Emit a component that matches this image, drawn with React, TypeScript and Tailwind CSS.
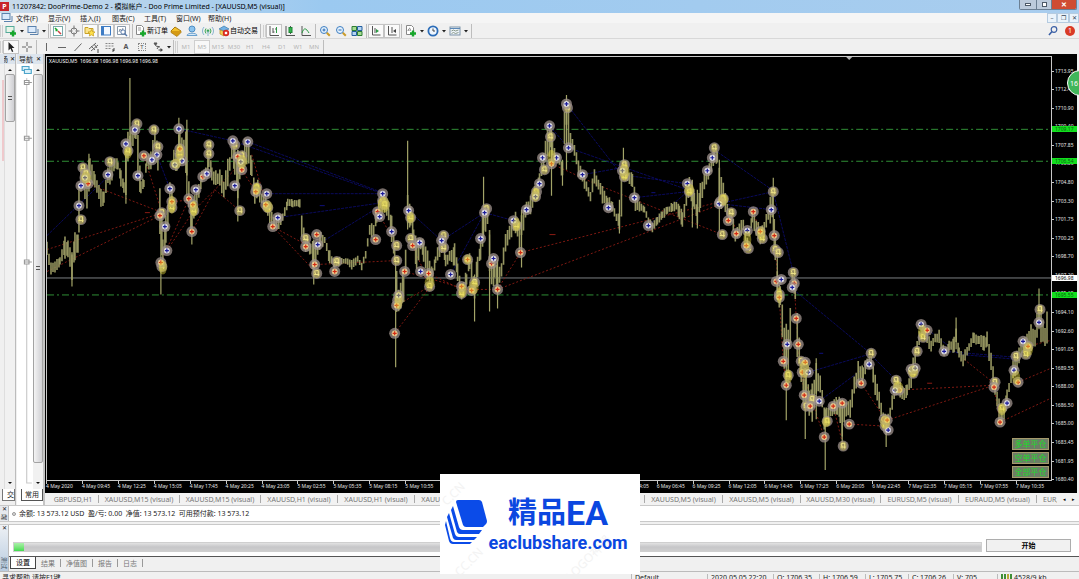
import React, { useState } from 'react';

// [x, high, low] anchor bars, the rest of the series is filled in between them
const ANCHORS: number[][] = [
    [47, 240, 256], [51, 262, 275], [55, 262, 276], [60, 255, 268], [65, 232, 260], [68, 240, 258], [72, 252, 284], [75, 232, 262], [78, 230, 258],
    [79, 180, 240], [81, 162, 200], [83, 166, 190], [87, 162, 210], [90, 158, 188], [95, 174, 188], [101, 185, 209], [104, 190, 206], [108, 166, 188],
    [112, 160, 182], [115, 155, 172], [118, 160, 172], [121, 166, 188], [124, 180, 194], [126, 150, 198], [128, 130, 165], [131, 130, 152], [136, 122, 140],
    [138, 132, 196], [141, 180, 194], [144, 178, 188], [147, 155, 168], [151, 150, 172], [153, 135, 172], [155, 125, 148], [158, 140, 178], [160, 170, 250],
    [163, 230, 270], [166, 215, 250], [168, 200, 233], [170, 180, 213], [172, 185, 208], [174, 146, 168], [177, 150, 173], [180, 122, 163], [184, 138, 160],
    [187, 125, 192], [189, 180, 215], [192, 200, 240], [195, 190, 213], [199, 180, 203], [202, 170, 184], [206, 165, 178], [209, 138, 168], [212, 164, 182],
    [216, 170, 190], [220, 168, 188], [224, 178, 202], [228, 158, 190], [232, 145, 163], [235, 140, 176], [238, 148, 200], [241, 155, 175], [245, 138, 163],
    [249, 142, 170], [252, 160, 178], [255, 184, 210], [258, 180, 198], [262, 190, 208], [266, 195, 213], [270, 206, 228], [275, 216, 230], [279, 213, 234],
    [283, 213, 223], [288, 197, 208], [293, 199, 209], [300, 198, 209], [302, 210, 238], [306, 235, 254], [311, 240, 258], [314, 238, 278], [318, 240, 258],
    [321, 232, 250], [325, 236, 246], [330, 250, 266], [335, 258, 270], [340, 256, 268], [346, 258, 265], [352, 260, 270], [358, 256, 264], [362, 262, 271],
    [366, 250, 260], [370, 222, 238], [374, 225, 238], [377, 206, 224], [381, 192, 213], [385, 196, 213], [389, 206, 224], [392, 216, 243], [395, 240, 262],
    [397, 260, 330], [399, 290, 312], [404, 268, 305], [406, 250, 273], [408, 195, 232], [411, 205, 228], [414, 226, 245], [417, 240, 275], [421, 236, 250],
    [424, 240, 263], [428, 250, 284], [433, 265, 288], [436, 255, 265], [440, 240, 258], [443, 236, 254], [446, 254, 268], [450, 250, 263], [455, 243, 268],
    [458, 260, 283], [462, 284, 302], [467, 270, 290], [470, 250, 270], [475, 275, 305], [478, 255, 278], [481, 238, 262], [484, 200, 240], [488, 205, 230],
    [490, 230, 275], [492, 255, 292], [495, 248, 286], [498, 270, 300], [502, 260, 278], [506, 230, 256], [510, 226, 244], [512, 220, 238], [516, 212, 234],
    [520, 215, 250], [524, 205, 232], [527, 202, 214], [531, 195, 220], [535, 186, 200], [540, 172, 188], [544, 152, 172], [548, 127, 163], [551, 125, 155],
    [556, 150, 164], [560, 152, 168], [563, 160, 180], [565, 105, 150], [567, 98, 128], [569, 105, 150], [571, 132, 150], [575, 145, 156], [579, 156, 178],
    [583, 170, 184], [587, 180, 195], [591, 190, 202], [595, 166, 184], [599, 180, 190], [603, 186, 204], [608, 196, 210], [613, 200, 213], [617, 211, 224],
    [620, 214, 230], [622, 170, 218], [624, 155, 183], [628, 166, 184], [633, 172, 190], [636, 190, 213], [640, 200, 213], [645, 206, 214], [649, 216, 225],
    [653, 221, 233], [658, 216, 225], [663, 210, 221], [668, 206, 215], [673, 202, 214], [677, 200, 210], [680, 202, 224], [683, 212, 228], [687, 190, 208],
    [690, 176, 198], [695, 190, 210], [698, 206, 226], [701, 182, 214], [705, 172, 190], [710, 161, 178], [715, 146, 164], [718, 150, 165], [720, 165, 220],
    [724, 182, 208], [728, 200, 219], [732, 211, 224], [736, 226, 244], [740, 221, 238], [744, 220, 234], [748, 236, 250], [753, 211, 224], [757, 216, 242],
    [761, 226, 246], [765, 220, 238], [769, 206, 223], [773, 185, 228], [776, 232, 264], [778, 270, 305], [781, 282, 310], [785, 318, 385], [789, 330, 378],
    [791, 300, 350], [793, 270, 298], [796, 278, 300], [798, 308, 358], [802, 350, 386], [804, 368, 420], [807, 366, 408], [810, 390, 418], [813, 382, 425],
    [817, 362, 398], [821, 372, 394], [825, 400, 434], [829, 405, 424], [833, 400, 418], [838, 396, 418], [841, 396, 424], [843, 398, 440], [847, 400, 418],
    [851, 398, 422], [855, 377, 400], [859, 358, 384], [864, 366, 384], [868, 356, 370], [872, 356, 372], [876, 372, 396], [880, 392, 414], [884, 410, 429],
    [887, 414, 440], [891, 405, 423], [895, 382, 404], [899, 376, 394], [903, 386, 403], [908, 385, 398], [912, 366, 390], [916, 350, 368], [920, 328, 350],
    [924, 321, 338], [928, 331, 344], [932, 340, 356], [936, 332, 344], [940, 330, 348], [945, 348, 360], [950, 341, 354], [955, 334, 354], [957, 325, 344],
    [960, 348, 359], [964, 354, 368], [970, 341, 354], [975, 331, 344], [980, 335, 348], [985, 336, 354], [988, 332, 350], [992, 350, 374], [996, 376, 400],
    [1000, 396, 428], [1003, 410, 428], [1008, 390, 408], [1012, 370, 384], [1016, 352, 378], [1020, 346, 364], [1024, 336, 354], [1028, 330, 358],
    [1032, 322, 354], [1036, 326, 348], [1040, 300, 330], [1042, 305, 350], [1046, 325, 350], [1050, 292, 348],
];

const SPIKES: number[][] = [
    [72, 255, 287], [89, 154, 180], [130, 78, 152], [126, 140, 204], [161, 215, 295], [179, 118, 160], [187, 120, 195], [192, 210, 245], [238, 150, 222],
    [314, 240, 285], [396, 260, 368], [408, 141, 230], [475, 275, 322], [484, 177, 240], [490, 235, 312], [552, 130, 196], [522, 210, 268], [567, 95, 170],
    [563, 160, 186], [624, 148, 180], [620, 200, 234], [774, 178, 235], [778, 250, 300], [787, 340, 421], [806, 380, 440], [826, 410, 471], [843, 400, 450],
    [887, 420, 448], [957, 318, 350], [1040, 289, 330], [720, 160, 232], [817, 359, 420], [693, 180, 228], [698, 190, 229], [498, 260, 309],
];

const noise = (n: number) => {
    const s = Math.sin(n * 91.7) * 4375.85;
    return s - Math.floor(s);
};

const buildBars = () => {
    let d = '';
    for (let i = 0; i < ANCHORS.length - 1; i++) {
        const [x0, h0, l0] = ANCHORS[i];
        const [x1, h1, l1] = ANCHORS[i + 1];
        for (let x = x0; x < x1; x += 2) {
            const t = (x - x0) / (x1 - x0);
            const high = h0 + (h1 - h0) * t;
            const low = l0 + (l1 - l0) * t;
            const span = low - high;
            d += `M${x} ${(high + span * 0.25 * noise(x)).toFixed(1)}V${(low - span * 0.25 * noise(x + 7)).toFixed(1)}`;
        }
    }
    return d;
};

const BARS = buildBars();
const SPIKE_PATH = SPIKES.map(([x, a, b]) => `M${x} ${a}V${b}`).join('');

const BUYS: number[][] = [
    [135, 130], [126, 144], [179, 129], [157, 155], [152, 160], [138, 176], [108, 175], [85, 178], [81, 186], [79, 206], [170, 189], [175, 165], [182, 161],
    [196, 190], [207, 174], [165, 227], [167, 251], [233, 141], [248, 142], [241, 162], [235, 186], [267, 194], [278, 218], [318, 245], [383, 194], [380, 217],
    [392, 232], [409, 211], [420, 243], [421, 272], [442, 241], [451, 275], [399, 296], [481, 239], [485, 213], [494, 259], [514, 221], [527, 210], [536, 197],
    [540, 184], [543, 158], [557, 158], [567, 104], [550, 126], [569, 148], [583, 175], [623, 171], [609, 208], [635, 198], [649, 226], [688, 184], [708, 171],
    [713, 158], [720, 204], [748, 231], [772, 210], [782, 280], [793, 288], [788, 345], [809, 373], [820, 402], [870, 365], [896, 391], [889, 431], [912, 370],
    [916, 369], [922, 325], [945, 352], [1008, 404], [1015, 371], [1024, 342], [1040, 323],
];

const SELLS: number[][] = [
    [144, 156], [88, 184], [180, 149], [172, 202], [189, 199], [193, 205], [203, 177], [192, 232], [160, 216], [161, 263], [238, 157], [242, 170], [256, 192],
    [266, 205], [273, 227], [306, 247], [317, 235], [315, 265], [335, 272], [376, 240], [378, 212], [405, 272], [413, 246], [429, 274], [397, 306], [395, 334],
    [468, 260], [462, 287], [472, 291], [492, 264], [498, 290], [521, 253], [552, 164], [721, 202], [729, 221], [737, 234], [747, 246], [754, 212], [761, 232],
    [775, 236], [777, 282], [780, 298], [795, 284], [797, 319], [799, 345], [784, 362], [787, 386], [806, 363], [803, 373], [805, 396], [811, 407], [825, 438],
    [834, 407], [843, 404], [850, 425], [862, 384], [900, 391], [885, 420], [888, 421], [928, 331], [995, 388], [1001, 423], [1019, 383], [1029, 347],
];

const CLOSES: number[][] = [
    [137, 124], [128, 151], [154, 130], [158, 147], [110, 162], [83, 168], [86, 174], [81, 220], [180, 154], [172, 208], [194, 211], [209, 145], [209, 154],
    [162, 213], [162, 267], [235, 145], [242, 156], [240, 211], [257, 188], [268, 208], [306, 239], [317, 274], [337, 262], [383, 201], [385, 205], [397, 246],
    [397, 261], [411, 218], [411, 239], [430, 287], [444, 236], [444, 248], [398, 301], [462, 294], [475, 283], [487, 209], [517, 226], [537, 192], [545, 170],
    [551, 137], [568, 108], [625, 165], [625, 177], [690, 192], [715, 148], [724, 199], [732, 213], [723, 235], [749, 249], [763, 239], [774, 192], [776, 250],
    [779, 253], [780, 295], [794, 273], [789, 376], [802, 362], [807, 407], [813, 400], [828, 422], [844, 447], [872, 354], [897, 381], [886, 427], [918, 352],
    [914, 374], [924, 338], [996, 383], [1003, 409], [1017, 357], [1027, 355], [1041, 310],
];

// solid yellow patches where several orders sit on one bar
const GLOWS: number[][] = [
    [128, 153, 4, 6], [180, 153, 4, 9], [86, 178, 5, 6], [172, 205, 4, 9], [163, 268, 4, 7], [194, 209, 4, 8], [176, 164, 5, 5], [242, 162, 5, 7], [257, 189, 4, 6],
    [268, 207, 5, 6], [384, 205, 6, 8], [411, 218, 4, 6], [399, 301, 4, 9], [430, 283, 5, 6], [463, 291, 4, 7], [474, 288, 5, 7], [468, 260, 4, 5], [517, 225, 4, 7],
    [536, 195, 4, 7], [552, 158, 4, 8], [625, 172, 5, 8], [690, 190, 5, 6], [724, 200, 5, 6], [748, 240, 4, 9], [762, 234, 4, 7], [780, 296, 3, 8], [805, 370, 5, 9],
    [789, 377, 4, 7], [827, 423, 4, 5], [886, 423, 5, 7], [914, 372, 5, 6], [923, 332, 4, 7], [899, 388, 5, 6], [1003, 410, 4, 6], [1029, 350, 5, 7], [1017, 378, 4, 7],
];

const BLUE_LINES =
    'M47 236L110 175M179 129L233 141L383 194M267 194L383 194M278 218L383 203M318 245L383 205M248 142L383 193M157 155L170 189M409 211L442 241M442 241L485 213L514 221M485 213L451 275M567 104L622 175L688 184M569 148L688 190M583 175L622 168M635 198L688 192M649 226L688 192M715 150L774 191M720 204L774 192M720 204L772 210M774 192L794 273M794 290L870 353M809 373L870 355M820 402L870 365M870 354L897 381M922 325L960 355L1017 360M550 126L569 148M945 352L1017 358';
const RED_LINES =
    'M47 250L160 214M47 272L160 216M88 184L160 212M144 156L162 213M172 202L194 200M167 251L194 211L240 165M192 232L215 190L240 211M189 199L161 263M242 170L256 192M273 227L306 245M273 227L317 274M317 265L397 261M378 212L397 246M395 334L430 288M397 306L430 287M405 272L475 292M413 246L430 285M429 274L462 290H498M498 290L521 253M521 253L721 202M498 290L720 205M552 164L600 186L723 235M721 202L732 213L737 234M754 212L763 239M775 236L780 298M780 298L784 362L787 386M795 284L797 319L799 345L805 396M797 345L803 373L825 438M834 407L844 447M850 425L886 427M862 384L886 420M897 391L995 386M888 421L995 386M965 360L995 384M995 388L1001 423M1001 423L1052 399M1019 383L1052 369M1029 347L1052 341M252 155L273 227';

const PRICES = [
    '1713.95', '1712.40', '1710.90', '1709.40', '1707.85', '1706.30', '1704.80', '1703.30', '1701.75', '1700.25', '1698.70', '1697.20',
    '1695.65', '1694.10', '1692.60', '1691.05', '1689.55', '1688.00', '1686.50', '1685.00', '1683.45', '1681.95', '1680.40',
];

const TIMES = [
    '4 May 2020', '4 May 09:45', '4 May 12:25', '4 May 15:05', '4 May 17:45', '4 May 20:25', '4 May 23:05', '5 May 02:55', '5 May 05:35', '5 May 08:15',
    '5 May 10:55', '5 May 13:35', '5 May 16:15', '5 May 18:55', '5 May 21:35', '6 May 01:25', '6 May 04:05', '6 May 06:45', '6 May 09:25', '6 May 12:05',
    '6 May 14:45', '6 May 17:25', '6 May 20:05', '6 May 22:45', '7 May 02:35', '7 May 05:15', '7 May 07:55', '7 May 10:35',
];

const CHART_TABS = [
    { label: 'GBPUSD,H1', width: 'w-[51px]' },
    { label: 'XAUUSD,M15 (visual)', width: 'w-[81px]' },
    { label: 'XAUUSD,M15 (visual)', width: 'w-[81px]' },
    { label: 'XAUUSD,H1 (visual)', width: 'w-[77px]' },
    { label: 'XAUUSD,H1 (visual)', width: 'w-[77px]' },
    { label: 'XAUUSD,H1 (visual)', width: 'w-[77px]' },
    { label: 'XAUUSD,H1 (visual)', width: 'w-[77px]' },
    { label: 'XAUUSD,H1 (visual)', width: 'w-[76px]' },
    { label: 'XAUUSD,M5 (visual)', width: 'w-[78px]' },
    { label: 'XAUUSD,M5 (visual)', width: 'w-[78px]' },
    { label: 'XAUUSD,M30 (visual)', width: 'w-[80px]' },
    { label: 'EURUSD,M5 (visual)', width: 'w-[78px]' },
    { label: 'EURAUD,M5 (visual)', width: 'w-[78px]' },
];

const Svg: React.FC<{ children: React.ReactNode }> = ({ children }) => (
    <svg viewBox="0 0 12 12" className="w-3 h-3 shrink-0" fill="none" stroke="#555" strokeWidth="1">
        {children}
    </svg>
);

const PLUS = <path d="M8 5.5v6M5 8.5h6" stroke="#16a62a" strokeWidth="2.4" />;

const ICONS: Record<string, React.ReactNode> = {
    newChart: <Svg><rect x="1" y="1.5" width="8" height="6" fill="#e8f5e8" stroke="#5a9" />{PLUS}</Svg>,
    profiles: <Svg><rect x="1" y="1.5" width="8" height="6" fill="#dbeafb" stroke="#5b82ad" /><path d="M3 9.5h8V4" stroke="#5b82ad" /></Svg>,
    market: <Svg><rect x="1.5" y="1.5" width="9" height="9" fill="#fff" stroke="#7aa" /><path d="M3 3l2.500 2.500M3.500 5.500h2" stroke="#16a62a" strokeWidth="1.500" /><path d="M6 6l3 3" stroke="#c44" strokeWidth="1.500" /></Svg>,
    data: <Svg><circle cx="6" cy="6" r="3" stroke="#777" /><path d="M6 .5v4M6 7.500v4M.5 6h4M7.500 6h4" stroke="#777" /></Svg>,
    folder: <Svg><path d="M1 2.500h3l1 1h4v5H1z" fill="#fce48a" stroke="#c9a227" /><path d="M7.500 4.500l1 2.200 2.500.3-1.800 1.600.5 2.400-2.200-1.200-2.200 1.200.5-2.400L4 7l2.500-.3z" fill="#ffe14d" stroke="#c39a15" strokeWidth=".7" /></Svg>,
    navigator: <Svg><rect x="1.500" y="1.500" width="9" height="8.500" fill="#f4f9ff" stroke="#3e7cc4" /><path d="M3 2v8" stroke="#3e7cc4" strokeWidth="2" /></Svg>,
    tester: <Svg><path d="M1.500 1.500h8v8h-8zM3 7l1-3 1.500 2L7 3" fill="#fff" stroke="#89a" /><circle cx="7" cy="7" r="2.200" stroke="#57a" /><path d="M8.500 8.500l2.500 2.500" stroke="#57a" strokeWidth="1.400" /></Svg>,
    order: <Svg><path d="M1.500.500h5l2 2v7h-7z" fill="#fff" stroke="#888" /><path d="M3 3h3M3 5h3" stroke="#999" />{PLUS}</Svg>,
    meta: <Svg><path d="M1 6l4-4 6 4-4 4z" fill="#f3c12d" stroke="#a97a10" /><path d="M1 6v1.500l6 4L11 7.500V6" fill="#d59a14" stroke="#a97a10" strokeWidth=".7" /></Svg>,
    cloud: <Svg><circle cx="6" cy="4" r="3" fill="#8cc3ee" stroke="#4f8ec4" /><path d="M1 10.500c0-3 10-3 10 0z" fill="#d7e9f8" stroke="#6aa0ce" /></Svg>,
    signal: <Svg><circle cx="6" cy="6" r="1.400" fill="#39a552" stroke="none" /><path d="M4 3.500a4 4 0 0 0 0 5M8 3.500a4 4 0 0 1 0 5" stroke="#39a552" /><path d="M2 2a6 6 0 0 0 0 8M10 2a6 6 0 0 1 0 8M6 6v5" stroke="#8ab4cf" /></Svg>,
    auto: <Svg><path d="M1 4l5-3 5 3-5 2z" fill="#72b3e6" stroke="#3b79ab" strokeWidth=".7" /><path d="M2 5v4l4 2V6.500z" fill="#f5cf57" stroke="#b58a1c" strokeWidth=".7" /><circle cx="8" cy="8" r="3.200" fill="#d9281f" stroke="none" /><rect x="6.800" y="6.800" width="2.400" height="2.400" fill="#fff" stroke="none" /></Svg>,
    bars: <Svg><path d="M2 1v9.500h9M5 3v5M5 7h1.500M7 4h1.500" stroke="#555" /><path d="M8.500 2v6" stroke="#2b9b43" /></Svg>,
    candles: <Svg><path d="M2 1v9.500h9M6.500 1v8" stroke="#555" /><rect x="5" y="2.500" width="3" height="5" fill="#33b44c" stroke="#1c8434" /></Svg>,
    line: <Svg><path d="M2 1v9.500h9" /><path d="M2 8c2-6 4-5 7 0" stroke="#2b9b43" /></Svg>,
    zoomIn: <Svg><circle cx="5" cy="5" r="3.500" fill="#e5f2fd" stroke="#3f7fc2" /><path d="M7.800 7.800l3 3" stroke="#c99b2a" strokeWidth="2" /><path d="M3.500 5h3M5 3.500v3" stroke="#2869b2" /></Svg>,
    zoomOut: <Svg><circle cx="5" cy="5" r="3.500" fill="#e5f2fd" stroke="#3f7fc2" /><path d="M7.800 7.800l3 3" stroke="#c99b2a" strokeWidth="2" /><path d="M3.500 5h3" stroke="#2869b2" /></Svg>,
    tile: <Svg><path d="M1 1.500h4.500v4H1zM6.500 6.500H11v4H6.500z" fill="#a6dc92" stroke="#2d7d32" /><path d="M6.500 1.500H11v4H6.500zM1 6.500h4.500v4H1z" fill="#b4d4f2" stroke="#235f9f" /></Svg>,
    scroll: <Svg><path d="M2.500 1v9h8M5 3v5" /><path d="M6 4l3 2-3 2z" fill="#2b9b43" stroke="none" /></Svg>,
    shift: <Svg><path d="M2.500 1v9h8M6 2v6" /><path d="M10 4L7 6l3 2z" fill="#444" stroke="none" /></Svg>,
    indicators: <Svg><path d="M1.500.500h5l2 2v7h-7z" fill="#fff" stroke="#888" /><path d="M3 6c1-4 3-3 2 0" stroke="#777" />{PLUS}</Svg>,
    clock: <Svg><circle cx="6" cy="6" r="4.600" fill="#eef6ff" stroke="#2b6cb8" strokeWidth="1.800" /><path d="M6 3.500V6h2" stroke="#444" /></Svg>,
    template: <Svg><rect x="1" y="2" width="10" height="8" fill="#eef4fa" stroke="#7d93a8" /><path d="M1 3.500h10" stroke="#5c89b8" /><path d="M2.500 6l2-1 2 1 3-1M2.500 8.500l2-1 2 1 3-1" stroke="#8a9a8a" /></Svg>,
    cursor: <Svg><path d="M3.500 1v8.500l2-2 1.500 3.500 1.300-.6L6.800 7H9.500z" fill="#222" stroke="none" /></Svg>,
    cross: <Svg><path d="M6 1v4M6 7v4M1 6h4M7 6h4" stroke="#666" /></Svg>,
    vline: <Svg><path d="M6.500 2v8" stroke="#666" /></Svg>,
    hline: <Svg><path d="M2 6.500h8" stroke="#666" /></Svg>,
    trend: <Svg><path d="M2.500 10L9.500 2.500" stroke="#666" /></Svg>,
    channel: <Svg><path d="M1 8l7-6M3 10l7-6M3 5l4 4M6 3l3 4" stroke="#666" /><path d="M9 9h2M9 11h2" stroke="#444" /></Svg>,
    fibo: <Svg><path d="M1.500 2.500h9M1.500 5h9M1.500 7.500h6" stroke="#888" strokeDasharray="2 1" /><path d="M9 11V8h2M9 9.500h1.500" stroke="#444" /></Svg>,
    arrows: <Svg><path d="M2 2h3L3.500 4.500zM4 5l4 1M5 8l2-3" fill="#555" stroke="#555" /><path d="M6.500 8.500h2V7L11 9 8.500 11V9.500h-2z" fill="#444" stroke="none" /></Svg>,
};

const Tool: React.FC<{ icon: string; label: string; pressed?: boolean }> = ({ icon, label, pressed }) => (
    <button
        type="button"
        aria-label={label}
        className={`w-4 h-3.5 shrink-0 flex items-center justify-center ${pressed ? 'bg-[#fafafa] border border-[#c4c4c4]' : ''}`}
    >
        {ICONS[icon]}
    </button>
);

const Caret = () => (
    <svg viewBox="0 0 6 6" className="w-1.5 h-1.5 shrink-0"><path d="M1 2h4L3 4.500z" fill="#222" /></svg>
);
const Sep = () => <span className="w-px h-3.5 mx-0.5 shrink-0 bg-[#bdbdbd]" />;
const ThinSep = () => <span className="w-px h-3.5 mx-px shrink-0 bg-[#bdbdbd]" />;
const Grip = () => <span className="w-[3px] h-3 shrink-0 border-x border-[#cfcfcf]" />;

const Chart: React.FC = () => (
    <svg viewBox="47 57 1005 424" preserveAspectRatio="none" className="absolute inset-0 w-full h-full">
        <defs>
            <g id="body">
                <circle r="5.500" fill="#9f918c" fillOpacity=".75" />
            </g>
            <g id="buy">
                <use href="#body" />
                <circle r="2.900" fill="#e6e6ee" fillOpacity=".9" />
                <path d="M-2 0H2M0-2V2" stroke="#1c1c9a" strokeWidth="1.200" />
            </g>
            <g id="sell">
                <use href="#body" />
                <circle r="2.900" fill="#f2cf8e" fillOpacity=".9" />
                <path d="M-2 0H2M0-2V2" stroke="#d42a14" strokeWidth="1.200" />
            </g>
            <g id="close">
                <use href="#body" />
                <ellipse rx="3.500" ry="4.500" fill="#ddd23f" fillOpacity=".35" />
                <path d="M-2-2.500L1.500-3V2.500M-2.500 1H2.500M-2-2L-1 1" stroke="#efe389" fill="none" />
            </g>
        </defs>
        <path d="M47 129.500H1052M47 161.500H1052M47 295.500H1052" stroke="#2f8f35" strokeDasharray="7 3 2 3" />
        <path d="M47 278.500H1052" stroke="#7c8083" />
        <path d={BLUE_LINES} stroke="#0c0c74" strokeWidth=".8" fill="none" strokeDasharray="3 1" />
        <path d={RED_LINES} stroke="#8c1c14" strokeWidth=".9" fill="none" strokeDasharray="2 2" />
        <path d="M550 235h6M928 384h5M145 213h5" stroke="#8c1c14" />
        <path d="M320 206h5M652 193h4M820 354h4" stroke="#10107c" />
        <path d={BARS} stroke="#94945f" strokeWidth="1.600" />
        <path d={SPIKE_PATH} stroke="#a3a468" strokeWidth="1.200" />
        {CLOSES.map(([x, y], i) => <use key={i} href="#close" x={x} y={y} />)}
        {SELLS.map(([x, y], i) => <use key={i} href="#sell" x={x} y={y} />)}
        {BUYS.map(([x, y], i) => <use key={i} href="#buy" x={x} y={y} />)}
        {GLOWS.map(([x, y, rx, ry], i) => <ellipse key={i} cx={x} cy={y} rx={rx} ry={ry} fill="#e3d83c" fillOpacity=".45" />)}
        <path d="M847 57h6l-3 3z" fill="#b5b5b5" />
    </svg>
);

const ScrollBar: React.FC<{ thumb: string }> = ({ thumb }) => (
    <div className="w-2.5 shrink-0 flex flex-col items-center bg-[#f1f1f1] py-0.5">
        <Arrow up />
        <div className="flex-1 min-h-0 w-full">
            <div className={`${thumb} w-full flex items-center justify-center rounded-xs border border-[#a3a3a3] bg-linear-to-r from-[#f4f4f4] to-[#cfcfd3]`}>
                <span className="w-1 h-1 border-y border-[#555]" />
            </div>
        </div>
        <Arrow />
    </div>
);

const Arrow: React.FC<{ up?: boolean }> = ({ up }) => (
    <svg viewBox="0 0 6 8" className="w-1.5 h-2 shrink-0"><path d={up ? 'M1 5h4L3 3z' : 'M1 3h4L3 5z'} fill="#111" /></svg>
);

const LogoCard: React.FC = () => (
    <div className="relative w-[200px] h-[100px] overflow-hidden bg-white text-[#0b47e0]">
        <span className="absolute left-0 top-3 -rotate-45 text-xs text-[#f3f3f3]">C.CN</span>
        <span className="absolute left-3 top-20 -rotate-45 text-xs text-[#f3f3f3]">CC.CN</span>
        <span className="absolute left-[120px] top-[76px] -rotate-45 text-xs text-[#f3f3f3]">LOGO神器</span>
        <div className="relative flex items-center h-full pl-[5px]">
            <svg viewBox="0 0 44 46" className="w-11 h-[46px] shrink-0 self-start mt-6" fill="#0b4be8">
                <path d="M13 2H34Q36 2 37 4L42 23Q42 25 41 26L38 29H21Q19 29 18 27L11 4Q11 2 13 2Z" />
                <path d="M8 8L14 29Q15 32 18 32H37L34 36H15Q13 36 12 34L6 12Z" />
                <path d="M4 15L10 36Q11 39 14 39H32L29 42H11Q9 42 8 40L2 19Z" />
                <path d="M1 23L5 40Q6 44 9 44H27L25 46H8Q5 46 4 43L0 27Z" />
            </svg>
            <div className="flex flex-col items-center gap-0.5">
                <div className="flex items-center h-9 font-bold font-[Roboto,'Noto_Sans_CJK_SC',sans-serif]">
                    <span className="text-[29px]">精品</span>
                    <span className="text-[34px]">EA</span>
                </div>
                <span className="font-bold text-[18px] leading-5 font-[Roboto,sans-serif]">eaclubshare.com</span>
            </div>
        </div>
    </div>
);

const App: React.FC = () => {
    const [period, setPeriod] = useState('M5');
    const [tab, setTab] = useState('设置');

    return (
        <div className="relative h-screen min-w-0 flex flex-col overflow-hidden bg-[#f0f0f0] text-[7px] leading-none text-[#222] font-['Noto_Sans','Noto_Sans_CJK_SC',sans-serif]">
            {/* Title bar */}
            <header className="h-[13px] shrink-0 flex items-center bg-linear-to-r from-[#c9dbea] via-[#9bc9f0] via-30% to-[#a9cdee]">
                <span className="w-[9px] h-[9px] mr-[3px] shrink-0 flex items-center justify-center bg-[#c8242b] font-bold text-white">P</span>
                <h1 className="flex-1 whitespace-nowrap text-black">11207842: DooPrime-Demo 2 - 模拟帐户 - Doo Prime Limited - [XAUUSD,M5 (visual)]</h1>
                <div className="flex self-start h-2.5 mr-0.5 border border-t-0 border-[#6b7f93] rounded-b-xs overflow-hidden text-white">
                    <button type="button" aria-label="最小化" className="w-4 flex items-center justify-center bg-[#bccbdc]"><span className="w-1.5 h-[3px] border border-[#4d5a68] bg-white" /></button>
                    <button type="button" aria-label="还原" className="w-4 flex items-center justify-center bg-[#bccbdc] border-x border-[#6b7f93]"><span className="w-[5px] h-[5px] border border-[#4d5a68] bg-white" /></button>
                    <button type="button" aria-label="关闭" className="w-6 flex items-center justify-center bg-[#cf4c33] font-bold">✕</button>
                </div>
            </header>

            {/* Menu */}
            <nav className="h-[10px] shrink-0 flex items-center bg-[#f5f5f5] pl-px">
                {ICONS.profiles}
                <span className="w-[3px]" />
                {['文件(F)', '显示(V)', '插入(I)', '图表(C)', '工具(T)', '窗口(W)', '帮助(H)'].map(item => (
                    <button key={item} type="button" className="w-8 shrink-0 whitespace-nowrap text-left">{item}</button>
                ))}
                <div className="ml-auto flex text-[6px] text-[#345]">
                    <button type="button" aria-label="最小化图表" className="w-2.5 h-2.5 border border-[#b5cbe0] bg-[#eaf3fb]">–</button>
                    <button type="button" aria-label="还原图表" className="w-3 h-2.5 border border-[#b5cbe0] bg-[#eaf3fb]">❐</button>
                    <button type="button" aria-label="关闭图表" className="w-2.5 h-2.5 border border-[#b5cbe0] bg-[#eaf3fb]">✕</button>
                </div>
            </nav>

            {/* Toolbars */}
            <div className="h-4 shrink-0 flex items-center border-b border-[#d8d8d8]">
                <Grip />
                <Tool icon="newChart" label="新图表" /><Caret />
                <Tool icon="profiles" label="配置文件" /><Caret />
                <ThinSep />
                <Tool icon="market" label="市场报价" pressed />
                <Tool icon="data" label="数据窗口" />
                <Tool icon="folder" label="导航" pressed />
                <Tool icon="navigator" label="终端" pressed />
                <Tool icon="tester" label="策略测试" pressed />
                <Sep />
                <button type="button" className="flex items-center shrink-0 text-black">{ICONS.order}新订单</button>
                <Tool icon="meta" label="MetaEditor" />
                <Tool icon="cloud" label="社区" />
                <Tool icon="signal" label="信号" />
                <button type="button" className="flex items-center shrink-0 ml-0.5 text-black">{ICONS.auto}自动交易</button>
                <Sep /><Grip />
                <Tool icon="bars" label="柱状图" pressed />
                <Tool icon="candles" label="阴阳烛" />
                <Tool icon="line" label="折线图" />
                <ThinSep />
                <Tool icon="zoomIn" label="放大" />
                <Tool icon="zoomOut" label="缩小" />
                <Tool icon="tile" label="平铺" />
                <ThinSep />
                <Tool icon="scroll" label="自动滚动" pressed />
                <Tool icon="shift" label="图表平移" pressed />
                <ThinSep />
                <Tool icon="indicators" label="指标" /><Caret />
                <Tool icon="clock" label="周期" /><Caret />
                <Tool icon="template" label="模板" /><Caret />
                <Sep />
                <div className="ml-auto flex items-center gap-1.5 pr-1">
                    <button type="button" aria-label="搜索">
                        <Svg><circle cx="7" cy="4.500" r="2.800" stroke="#3a5fa5" strokeWidth="1.200" /><path d="M5 6.500L2 10" stroke="#3a5fa5" strokeWidth="1.600" /></Svg>
                    </button>
                    <button type="button" className="w-2.5 h-2.5 rounded-full bg-[#d93a26] text-white">1</button>
                </div>
            </div>
            <div className="h-[15px] shrink-0 flex items-center">
                <Grip />
                <Tool icon="cursor" label="光标" pressed />
                <Tool icon="cross" label="十字线" />
                <ThinSep />
                <Tool icon="vline" label="垂直线" />
                <Tool icon="hline" label="水平线" />
                <Tool icon="trend" label="趋势线" />
                <Tool icon="channel" label="通道" />
                <Tool icon="fibo" label="斐波那契" />
                <button type="button" className="w-4 font-bold text-[#555]">A</button>
                <button type="button" className="w-4 flex justify-center text-[6px] text-[#555]"><span className="w-2 h-2 border border-dotted border-[#888]">T</span></button>
                <Tool icon="arrows" label="箭头" /><Caret />
                <ThinSep /><Grip />
                {['M1', 'M5', 'M15', 'M30', 'H1', 'H4', 'D1', 'W1', 'MN'].map(p => (
                    <button
                        key={p}
                        type="button"
                        onClick={() => setPeriod(p)}
                        className={`w-4 h-3.5 shrink-0 text-[6px] text-[#b4b4b4] ${p === period ? 'bg-[#f8f8f8] border border-[#cfcfcf]' : ''}`}
                    >
                        {p}
                    </button>
                ))}
                <ThinSep />
            </div>

            {/* Workspace */}
            <main className="flex-1 min-h-0 flex">
                <aside className="w-4 min-h-0 shrink-0 flex flex-col border-r border-[#bcbcbc] bg-[#f0f0f0]">
                    <div className="h-2.5 shrink-0 flex items-center justify-end gap-0.5 overflow-hidden bg-[#dce4ed]"><span className="w-1 overflow-hidden flex justify-end">场</span><span className="text-[6px] text-black">✕</span></div>
                    <div className="flex-1 min-h-0 flex justify-end">
                        <div className="flex-1 border-r border-[#dedede]"><div className="h-[19%] mt-4 border-r-2 border-[#efc9cc]" /></div>
                        <ScrollBar thumb="h-12" />
                    </div>
                    <div className="h-3 mb-1 shrink-0 ml-0.5 border border-t-0 border-[#777] bg-white overflow-hidden flex items-center justify-end">交</div>
                </aside>
                <aside className="w-7 min-h-0 shrink-0 flex flex-col ml-px border-r-2 border-[#c4c4c4] bg-white">
                    <div className="h-2.5 shrink-0 flex items-center justify-between px-0.5 bg-[#dce4ed]"><span className="whitespace-nowrap">导航</span><span className="text-[6px] text-black">✕</span></div>
                    <div className="flex-1 min-h-0 flex">
                        <svg viewBox="0 0 14 426" preserveAspectRatio="none" className="flex-1 min-w-0 h-full" fill="none" stroke="#999">
                            <rect x="4.500" y="2.500" width="6" height="4" fill="#d9f0fa" stroke="#4ba3c9" />
                            <rect x="6.500" y="5.500" width="6" height="4" fill="#d9f0fa" stroke="#4ba3c9" />
                            <path d="M8.500 14V420H13" stroke="#c9c9c9" />
                            <path d="M6.500 16.500h4v4h-4zM6.500 72.500h4v4h-4zM6.500 196.500h4v4h-4z" fill="#fff" />
                            <path d="M7 18.500h6M7 74.500h6M7 198.500h6" />
                        </svg>
                        <ScrollBar thumb="h-[96%]" />
                    </div>
                    <div className="h-3 mb-1 shrink-0 ml-1 border border-t-0 border-[#555] bg-white flex items-center justify-center whitespace-nowrap">常用</div>
                </aside>

                <section className="flex-1 min-w-0 flex flex-col">
                    <div className="flex-1 min-h-0 flex flex-col bg-black mr-0.5 pt-0.5 pl-px text-[5px] text-[#e6e6e6]">
                        <div className="flex-1 min-h-0 flex">
                            <div className="relative flex-1 border border-[#c8c8c8]">
                                <Chart />
                                <p className="relative pt-0.5 pl-0.5 text-white">XAUUSD,M5&nbsp; 1696.98 1696.98 1696.98 1696.98</p>
                                <div className="absolute right-0.5 bottom-0.5 flex flex-col gap-0.5">
                                    {['多单平仓', '空单平仓', '全部平仓'].map(label => (
                                        <button key={label} type="button" className="w-[37px] h-3 border border-[#a59a6c] bg-[#6d7d66] text-[8px] leading-[10px] text-[#22d62c]">{label}</button>
                                    ))}
                                </div>
                            </div>
                            <div className="relative w-[25px] shrink-0">
                                <ul className="absolute inset-x-0 top-3 -bottom-0.5 flex flex-col justify-between">
                                    {PRICES.map(p => (
                                        <li key={p} className="flex items-center h-1.5"><span className="w-0.5 h-px mr-px bg-[#c8c8c8]" />{p}</li>
                                    ))}
                                </ul>
                                <span className="absolute inset-x-0 top-[16.5%] h-1.5 pl-[3px] leading-[6px] bg-[#12e01e] text-[#0a5c10]">1709.17</span>
                                <span className="absolute inset-x-0 top-[24%] h-1.5 pl-[3px] leading-[6px] bg-[#12e01e] text-[#0a5c10]">1706.54</span>
                                <span className="absolute inset-x-0 top-[51.600%] h-1.5 pl-[3px] leading-[6px] bg-white text-black">1696.98</span>
                                <span className="absolute inset-x-0 top-[55.600%] h-1.5 pl-[3px] leading-[6px] bg-[#12e01e] text-[#0a5c10]">1695.55</span>
                            </div>
                        </div>
                        <ul className="h-3 shrink-0 flex pr-[25px]">
                            {TIMES.map(t => (
                                <li key={t} className="flex-1 min-w-0 whitespace-nowrap"><span className="block w-px h-[3px] bg-[#c8c8c8]" />{t}</li>
                            ))}
                        </ul>
                    </div>
                    <div className="h-3 shrink-0 flex items-center bg-[#f2f2f2] pl-[3px] overflow-hidden text-[#777]">
                        {CHART_TABS.map((t, i) => (
                            <button key={i} type="button" className={`${t.width} h-2 shrink-0 whitespace-nowrap border-r border-[#aaa]`}>{t.label}</button>
                        ))}
                        <button type="button" className="ml-1.5 whitespace-nowrap w-3.5 overflow-hidden text-left">EUR,</button>
                        <span className="ml-auto pr-1 flex gap-1.5 text-[5px] text-black"><span>◂</span><span>▸</span></span>
                    </div>
                </section>
            </main>

            {/* Terminal */}
            <div className="h-[17px] shrink-0 flex border-y border-[#c9c9c9]">
                <div className="w-2 shrink-0 flex flex-col items-center gap-0.5 bg-[#e6e9ee] text-[6px] overflow-hidden"><span>✕</span><span className="rotate-90">端</span></div>
                <p className="flex-1 flex items-center bg-white border-l border-[#bbb] pl-[3px] whitespace-nowrap">
                    <span className="w-1 h-1 mr-[3px] rounded-full border border-[#999] bg-[#ddd]" />
                    余额: 13 573.12 USD&nbsp; 盈/亏: 0.00&nbsp; 净值: 13 573.12&nbsp; 可用预付款: 13 573.12
                </p>
            </div>

            {/* Strategy tester */}
            <div className="h-[47px] mt-0.5 shrink-0 flex border-t border-[#c9c9c9]">
                <div className="w-2 shrink-0 flex flex-col items-center justify-between bg-linear-to-b from-[#eef1f5] to-[#b9cce0] text-[6px]">
                    <span>✕</span>
                    <span className="flex flex-col text-[#456] pb-0.5"><span className="rotate-90">测</span><span className="rotate-90">试</span></span>
                </div>
                <div className="flex-1 min-w-0 flex flex-col border-l border-[#bbb]">
                    <div className="h-[31px] shrink-0 flex items-end gap-1 bg-white pl-1 pr-2 pb-1">
                        <div role="progressbar" aria-valuenow={1} aria-label="测试进度" className="flex-1 h-2.5 border border-[#cfcfcf] bg-linear-to-b from-[#e2e2e2] via-[#c6c6c8] to-[#cecece]">
                            <div className="w-[1%] h-full bg-linear-to-b from-[#a9f0a9] to-[#3fdc4c]" />
                        </div>
                        <button type="button" className="w-[85px] h-[13px] border border-[#adadad] bg-[#f1f1f1] font-bold text-black">开始</button>
                    </div>
                    <div className="flex-1 flex items-start border-t border-[#555] text-[#777]">
                        {['设置', '结果', '净值图', '报告', '日志'].map(name => (
                            <button
                                key={name}
                                type="button"
                                onClick={() => setTab(name)}
                                className={`px-[5px] whitespace-nowrap ${name === tab ? 'h-3 ml-px bg-white border border-t-0 border-[#444] text-black' : 'h-2 mt-0.5 border-r border-[#999]'}`}
                            >
                                {name}
                            </button>
                        ))}
                    </div>
                </div>
            </div>

            {/* Status bar, runs past the lower edge of the window */}
            <footer className="h-2 shrink-0 flex items-start border-t border-[#bbb] pt-0.5 pl-0.5 overflow-hidden whitespace-nowrap">
                <span className="flex-1">寻求帮助,请按F1键</span>
                <span className="w-[76px] border-l border-[#bbb] pl-[3px]">Default</span>
                <span className="w-[66px] border-l border-[#bbb] pl-[3px]">2020.05.05 22:20</span>
                <span className="w-[46px] border-l border-[#bbb] pl-[3px]">O: 1706.35</span>
                <span className="w-[46px] border-l border-[#bbb] pl-[3px]">H: 1706.59</span>
                <span className="w-[43px] border-l border-[#bbb] pl-[3px]">L: 1705.75</span>
                <span className="w-[45px] border-l border-[#bbb] pl-[3px]">C: 1706.26</span>
                <span className="w-11 border-l border-[#bbb] pl-[3px]">V: 705</span>
                <span className="w-[82px] flex gap-px border-l border-[#bbb] pl-[3px]">
                    <i className="w-0.5 h-2 bg-[#3f8f35]" /><i className="w-0.5 h-2 bg-[#3f8f35]" /><i className="w-0.5 h-2 bg-[#b8a935]" /><i className="w-0.5 h-2 mr-px bg-[#3f8f35]" />
                    4528/9 kb
                </span>
            </footer>

            {/* Floating items over the window */}
            <div className="absolute inset-x-0 bottom-[5px] flex justify-center pointer-events-none"><LogoCard /></div>
            <div className="absolute -right-3.5 top-[70px] w-[26px] h-[26px] flex items-center pl-0.5 rounded-full border border-white bg-[#41b65a] text-[7px] text-white">16</div>
        </div>
    );
};

export default App;
